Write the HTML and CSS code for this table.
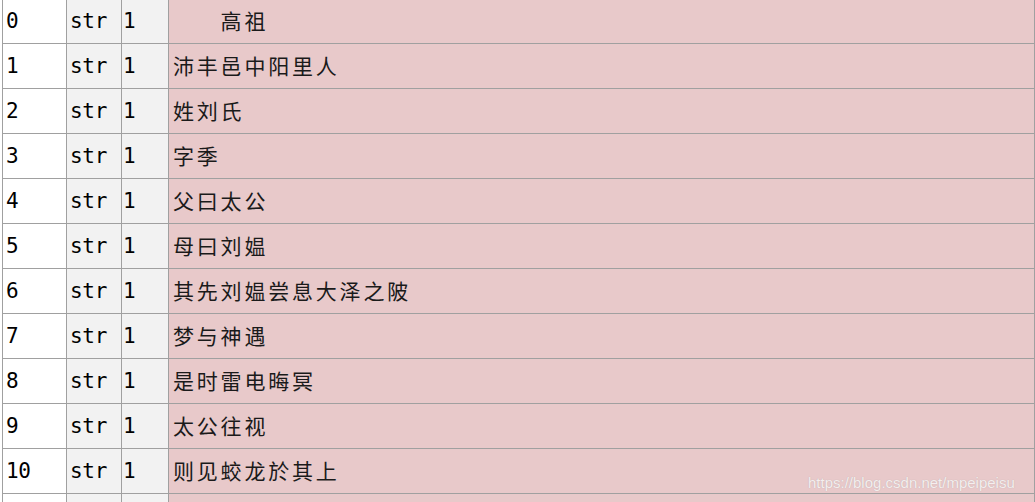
FILE: index.html
```html
<!DOCTYPE html>
<html>
<head>
<meta charset="utf-8">
<link rel="stylesheet" href="styles.css">
</head>
<body>
<div class="sheet">
  <div class="row"><div class="c idx">0</div><div class="c typ">str</div><div class="c len">1</div><div class="c val">　　高祖</div></div>
  <div class="row"><div class="c idx">1</div><div class="c typ">str</div><div class="c len">1</div><div class="c val">沛丰邑中阳里人</div></div>
  <div class="row"><div class="c idx">2</div><div class="c typ">str</div><div class="c len">1</div><div class="c val">姓刘氏</div></div>
  <div class="row"><div class="c idx">3</div><div class="c typ">str</div><div class="c len">1</div><div class="c val">字季</div></div>
  <div class="row"><div class="c idx">4</div><div class="c typ">str</div><div class="c len">1</div><div class="c val">父曰太公</div></div>
  <div class="row"><div class="c idx">5</div><div class="c typ">str</div><div class="c len">1</div><div class="c val">母曰刘媪</div></div>
  <div class="row"><div class="c idx">6</div><div class="c typ">str</div><div class="c len">1</div><div class="c val">其先刘媪尝息大泽之陂</div></div>
  <div class="row"><div class="c idx">7</div><div class="c typ">str</div><div class="c len">1</div><div class="c val">梦与神遇</div></div>
  <div class="row"><div class="c idx">8</div><div class="c typ">str</div><div class="c len">1</div><div class="c val">是时雷电晦冥</div></div>
  <div class="row"><div class="c idx">9</div><div class="c typ">str</div><div class="c len">1</div><div class="c val">太公往视</div></div>
  <div class="row"><div class="c idx">10</div><div class="c typ">str</div><div class="c len">1</div><div class="c val">则见蛟龙於其上</div></div>
  <div class="row stub"><div class="c idx"></div><div class="c typ"></div><div class="c len"></div><div class="c val"></div></div>
</div>
<div class="watermark">https://blog.csdn.net/mpeipeisu</div>
</body>
</html>
```
FILE: styles.css
```css
html, body {
  margin: 0;
  padding: 0;
  background: #ffffff;
  overflow: hidden;
  height: 502px;
}
.sheet {
  margin: -1px 0 0 2px;
  border-left: 1px solid #a0a0a0;
}
.row {
  display: grid;
  grid-template-columns: 64px 55px 47px 1fr;
  height: 45px;
}
.row.stub {
  height: 8px;
}
.stub .c {
  border-bottom: none;
}
.c {
  box-sizing: border-box;
  border-right: 1px solid #a0a0a0;
  border-bottom: 1px solid #a0a0a0;
  display: flex;
  align-items: center;
  padding-left: 3px;
  font-family: "DejaVu Sans Mono", "Liberation Mono", monospace;
  font-size: 21px;
  letter-spacing: -0.3px;
  color: #000000;
  white-space: pre;
}
.idx { background: #ffffff; }
.typ { background: #f2f2f2; }
.len { background: #f2f2f2; padding-left: 1px; }
.val {
  background: #e8c9ca;
  padding-left: 4px;
  padding-bottom: 2px;
  font-family: "Noto Sans CJK SC", sans-serif;
  font-size: 21px;
  letter-spacing: 2.8px;
  color: #1a1a1a;
}
.watermark {
  position: absolute;
  left: 808px;
  top: 474px;
  font-family: "Liberation Sans", Arial, sans-serif;
  font-size: 15px;
  color: #f4eeee;
  text-shadow: 0 0 1px #b8a8a8;
}
```
